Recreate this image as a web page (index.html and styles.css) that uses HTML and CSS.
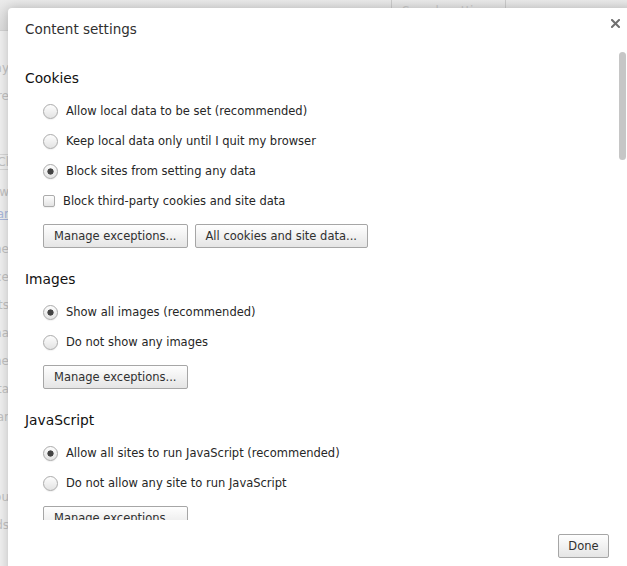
FILE: index.html
```html
<!DOCTYPE html>
<html lang="en">
<head>
    <meta charset="UTF-8">
    <title>Settings - Content settings</title>
    <link rel="stylesheet" href="styles.css">
</head>
<body>
    <!-- settings page behind the dialog -->
    <div class="page">
        <div class="page-top">
            <div class="search-box">Search settings</div>
        </div>
        <div class="page-col">
            <div class="line line-first">Display</div>
            <div class="line">Where</div>
            <div class="gap gap-44"></div>
            <div class="line line-box">Cl</div>
            <div class="gap gap-8"></div>
            <div class="line">Allow</div>
            <div class="line line-link"><span>Lear</span></div>
            <div class="gap gap-13"></div>
            <div class="line">The</div>
            <div class="line">Advance</div>
            <div class="line">Fonts</div>
            <div class="line">Mana</div>
            <div class="line">The</div>
            <div class="line">Data</div>
            <div class="line">Clear</div>
            <div class="gap gap-52"></div>
            <div class="line">You</div>
            <div class="line">Adds</div>
        </div>
    </div>

    <div class="dialog">
        <div class="dialog-head">
            <h1>Content settings</h1>
            <button class="close" title="Close">
                <svg width="9" height="9" viewBox="0 0 9 9">
                    <path d="M1 1L8 8M8 1L1 8" stroke="#707070" stroke-width="2" stroke-linecap="square"/>
                </svg>
            </button>
        </div>

        <div class="dialog-body">
            <div class="scroll-thumb"></div>

            <section>
                <h3>Cookies</h3>
                <label class="option"><input type="radio" name="cookies"> Allow local data to be set (recommended)</label>
                <label class="option"><input type="radio" name="cookies"> Keep local data only until I quit my browser</label>
                <label class="option"><input type="radio" name="cookies" checked> Block sites from setting any data</label>
                <label class="option option-check"><input type="checkbox"> Block third-party cookies and site data</label>
                <div class="actions">
                    <button class="btn">Manage exceptions...</button>
                    <button class="btn">All cookies and site data...</button>
                </div>
            </section>

            <section>
                <h3>Images</h3>
                <label class="option"><input type="radio" name="images" checked> Show all images (recommended)</label>
                <label class="option"><input type="radio" name="images"> Do not show any images</label>
                <div class="actions">
                    <button class="btn">Manage exceptions...</button>
                </div>
            </section>

            <section>
                <h3>JavaScript</h3>
                <label class="option"><input type="radio" name="js" checked> Allow all sites to run JavaScript (recommended)</label>
                <label class="option"><input type="radio" name="js"> Do not allow any site to run JavaScript</label>
                <div class="actions">
                    <button class="btn">Manage exceptions...</button>
                </div>
            </section>
        </div>

        <div class="dialog-foot">
            <button class="btn btn-done">Done</button>
        </div>
    </div>
</body>
</html>
```

FILE: styles.css
```css
body {
    margin: 0;
    height: 566px;
    overflow: hidden;
    background: #f0f0f0;
    font-family: "DejaVu Sans", sans-serif;
}

/* page behind the overlay */
.page-top {
    height: 30px;
    background: linear-gradient(#ebebeb, #dcdcdc);
    border-bottom: 1px solid #d2d2d2;
}
.search-box {
    margin-left: 391px;
    width: 103px;
    height: 30px;
    padding-left: 10px;
    border-left: 1px solid #cccccc;
    border-right: 1px solid #cccccc;
    font-size: 12px;
    line-height: 22px;
    color: #cacaca;
}
.page-col {
    width: 9px;
    overflow: hidden;
    font-size: 12px;
    color: #c2c2c2;
}
.line {
    display: flex;
    justify-content: flex-end;
    align-items: center;
    height: 28px;
    white-space: nowrap;
}
.line-first {
    margin-top: 23px;
}
.line-box {
    height: 14px;
    border-top: 1px solid #d6d6d6;
    border-bottom: 1px solid #d6d6d6;
}
.line-link {
    height: 16px;
}
.line-link span {
    color: #aab8dc;
    text-decoration: underline;
}
.gap-44 { height: 44px; }
.gap-8 { height: 8px; }
.gap-13 { height: 13px; }
.gap-52 { height: 52px; }

/* dialog */
.dialog {
    position: absolute;
    left: 8px;
    top: 8px;
    width: 627px;
    height: 570px;
    background: #fff;
    border-radius: 4px 4px 0 0;
    box-shadow: 0 0 12px rgba(0, 0, 0, 0.22);
}
.dialog-head {
    position: relative;
    height: 42px;
    padding: 12px 17px 0;
    box-sizing: border-box;
}
.dialog-head h1 {
    margin: 0;
    font-size: 13.5px;
    font-weight: normal;
    line-height: 18px;
    color: #303030;
}
.close {
    position: absolute;
    top: 10px;
    right: 14px;
    width: 11px;
    height: 11px;
    padding: 1px;
    border: none;
    background: none;
    cursor: pointer;
}
.close svg {
    display: block;
}

.dialog-body {
    position: relative;
    height: 470px;
    padding: 0 17px;
    overflow: hidden;
}
.scroll-thumb {
    position: absolute;
    top: 2px;
    right: 9px;
    width: 7px;
    height: 108px;
    border-radius: 4px;
    background: #c6c6c6;
}
.dialog-body h3 {
    margin: 19px 0 9px;
    font-size: 13.8px;
    font-weight: normal;
    line-height: 18px;
    color: #111;
}
.dialog-body section + section h3 {
    margin-top: 22px;
}
.option {
    display: flex;
    align-items: center;
    height: 30px;
    padding-left: 18px;
    font-size: 11.5px;
    color: #262626;
}
.option input {
    appearance: none;
    -webkit-appearance: none;
    flex: none;
    width: 15px;
    height: 15px;
    margin: 0 8px 0 0;
    border: 1px solid #ababab;
    border-radius: 50%;
    background: linear-gradient(#fdfdfd, #e3e3e3);
    box-shadow: 0 1px 1px rgba(0, 0, 0, 0.06);
}
.option input:checked {
    background: radial-gradient(circle, #444 0, #444 2.8px, transparent 3.4px),
        linear-gradient(#fdfdfd, #e3e3e3);
}
.option-check input {
    width: 12px;
    height: 12px;
    border-radius: 2px;
}

.actions {
    display: flex;
    gap: 7px;
    margin-top: 8px;
    padding-left: 18px;
}
.btn {
    height: 24px;
    padding: 0 10px;
    border: 1px solid #a6a6a6;
    border-radius: 2px;
    background: linear-gradient(#fefefe, #e5e5e5);
    font-family: "DejaVu Sans", sans-serif;
    font-size: 11.5px;
    color: #303030;
    cursor: pointer;
}

.dialog-foot {
    display: flex;
    justify-content: flex-end;
    padding: 14px 26px 0 0;
}
.btn-done {
    width: 51px;
    padding: 0;
}
```
